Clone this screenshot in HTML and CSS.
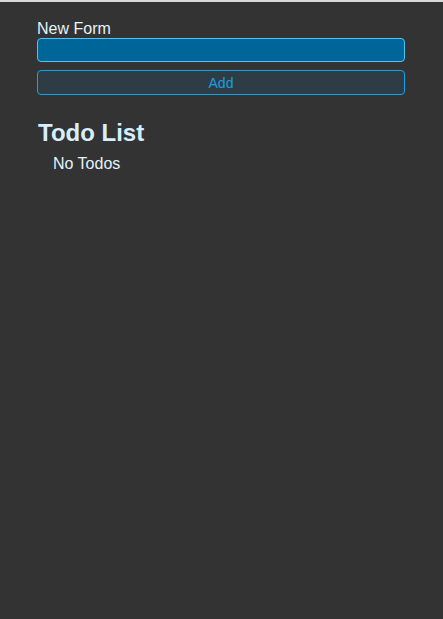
FILE: index.html
```html
<!DOCTYPE html>
<html>
<head>
<meta charset="utf-8">
<link rel="stylesheet" href="styles.css">
</head>
<body>
<div class="app">
  <form class="new-form">
    <label class="form-label" for="todo">New Form</label>
    <input class="form-input" id="todo" type="text">
    <button class="form-button" type="button">Add</button>
  </form>
  <section class="todo-list">
    <h2 class="list-title">Todo List</h2>
    <p class="empty">No Todos</p>
  </section>
</div>
</body>
</html>
```
FILE: styles.css
```css
html, body {
  margin: 0;
  padding: 0;
  height: 100%;
}
body {
  background: #333333;
  border-top: 2px solid #d8d8d8;
  box-sizing: border-box;
  font-family: "Liberation Sans", Arial, sans-serif;
  color: #e3f2fd;
}
.app {
  padding: 18px 38px 0 37px;
}
.new-form {
  display: flex;
  flex-direction: column;
  margin: 0;
}
.form-label {
  font-size: 16px;
  line-height: 18px;
  color: #e3f2fd;
  margin-bottom: 0;
}
.form-input {
  box-sizing: border-box;
  height: 24px;
  margin: 0;
  background: #006699;
  border: 1px solid #4fc3f7;
  border-radius: 4px;
  color: #fff;
  font: inherit;
}
.form-button {
  box-sizing: border-box;
  height: 25px;
  margin: 8px 0 0;
  background: #2e3d45;
  border: 1px solid #0ea5f0;
  border-radius: 4px;
  color: #199fe3;
  font-family: "Liberation Sans", Arial, sans-serif;
  font-size: 14px;
  padding: 0;
}
.todo-list {
  margin-top: 24px;
}
.list-title {
  margin: 0 0 0 1px;
  font-size: 24px;
  line-height: 28px;
  font-weight: bold;
  color: #d6efff;
}
.empty {
  margin: 8px 0 0 16px;
  font-size: 16px;
  line-height: 18px;
  color: #e3f2fd;
}
```
